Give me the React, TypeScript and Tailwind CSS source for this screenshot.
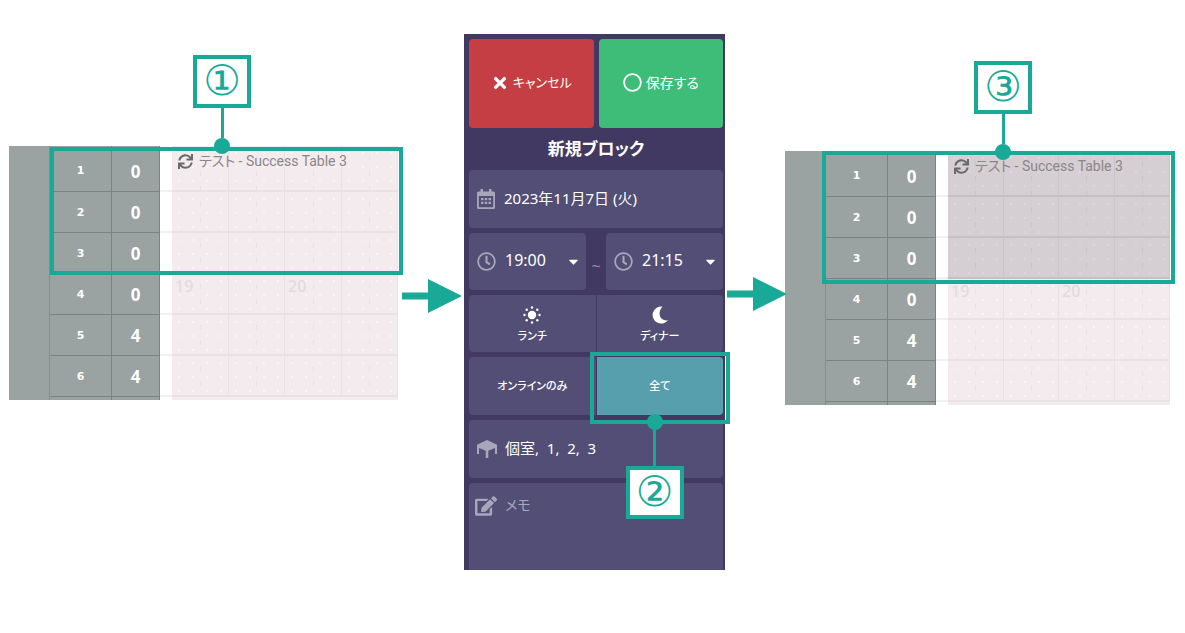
import { useState, type ReactNode } from 'react';
import { FaTimes, FaRegCircle, FaRegClock, FaCaretDown, FaEdit, FaSync } from 'react-icons/fa';

const ROWS = [
  { table: 1, seats: 0 },
  { table: 2, seats: 0 },
  { table: 3, seats: 0 },
  { table: 4, seats: 0 },
  { table: 5, seats: 4 },
  { table: 6, seats: 4 },
];

const TIMES = ['19:00', '20:00', '21:15', '22:00'];

function CalendarIcon() {
  return (
    <svg viewBox="0 0 18 20" className="h-5 w-[18px]" fill="currentColor">
      <path d="M3.500 0h2.500v2.500h6V0h2.500v2.500h2A1.500 1.500 0 0 1 18 4v14.500a1.500 1.500 0 0 1-1.500 1.500h-15A1.500 1.500 0 0 1 0 18.500V4a1.500 1.500 0 0 1 1.500-1.500h2zM1.800 7v10.600c0 .4.200.6.600.6h13.200c.4 0 .6-.2.600-.6V7z" />
      <path d="M4 9h2.500v2.300H4zm3.750 0h2.500v2.300h-2.500zm3.750 0H14v2.300h-2.500zM4 12.800h2.500v2.300H4zm3.750 0h2.500v2.300h-2.500zm3.750 0H14v2.300h-2.500z" />
    </svg>
  );
}

function TableIcon() {
  return (
    <svg viewBox="0 0 20 18" className="h-[18px] w-5" fill="currentColor">
      <path d="M10 0 20 4.800V14h-2V8L11.300 10.800V18H8.700V10.800L2 8V14H0V4.800z" />
    </svg>
  );
}

function SunIcon() {
  return (
    <svg viewBox="0 0 18 18" className="size-[18px]" fill="currentColor">
      <circle cx="9" cy="9" r="4.200" />
      <circle cx="9" cy="1.500" r="1.200" />
      <circle cx="9" cy="16.500" r="1.200" />
      <circle cx="1.500" cy="9" r="1.200" />
      <circle cx="16.500" cy="9" r="1.200" />
      <circle cx="3.700" cy="3.700" r="1.200" />
      <circle cx="14.300" cy="3.700" r="1.200" />
      <circle cx="3.700" cy="14.300" r="1.200" />
      <circle cx="14.300" cy="14.300" r="1.200" />
    </svg>
  );
}

function MoonIcon() {
  return (
    <svg viewBox="0 0 18 18" className="size-[18px]" fill="currentColor">
      <path d="M11.500.5A8.600 8.600 0 1 0 17 14.300C8.500 15.500 6 6.500 11.500.5z" />
    </svg>
  );
}

function Arrow() {
  return (
    <svg viewBox="0 0 60 34" className="relative z-10 h-[34px] w-[60px] shrink-0" fill="#18aa97">
      <path d="M0 13.500h26V0l34 17-34 17V20.500H0z" />
    </svg>
  );
}

function Callout({ label, className, below }: { label: string; className: string; below?: boolean }) {
  return (
    <div className={`absolute flex items-center ${below ? 'flex-col-reverse' : 'flex-col'} ${className}`}>
      <div className="flex h-[53px] w-[58px] items-center justify-center border-4 border-[#18aa97] bg-white pb-0.5 font-['DejaVu_Sans',sans-serif] text-[42px] leading-none text-[#18aa97]">
        {label}
      </div>
      <div className={`w-[3px] bg-[#18aa97] ${below ? 'h-9' : 'h-[30px]'}`} />
      <div className="size-4 rounded-full bg-[#18aa97]" />
    </div>
  );
}

function Slot({ hour, blocked }: { hour?: string; blocked: boolean }) {
  return (
    <td
      className={`relative border-r border-b-2 bg-[size:14px_14px] p-0 ${
        blocked
          ? 'border-r-[#cbc5c9] border-b-[#c6c0c4] bg-[#d5ced3] bg-[radial-gradient(circle,#dcd6da_1px,transparent_1px)]'
          : 'border-r-[#e9e2e5] border-b-[#e9e1e4] bg-[#f4ebee] bg-[radial-gradient(circle,#f9f4f6_1px,transparent_1px)]'
      }`}
    >
      <span
        className={`absolute inset-y-0 left-1/2 w-px ${
          blocked
            ? 'bg-[repeating-linear-gradient(transparent_0_10px,#cbc4c9_10px_15px)]'
            : 'bg-[repeating-linear-gradient(transparent_0_10px,#e9e1e5_10px_15px)]'
        }`}
      />
      {hour && <span className="absolute top-0.5 left-[3px] text-base leading-5 font-medium text-[#e3dbdf]">{hour}</span>}
    </td>
  );
}

function Timetable({ blocked, children }: { blocked: boolean; children: ReactNode }) {
  return (
    <section className="relative">
      <table className="w-full table-fixed border-separate border-spacing-0">
        <colgroup>
          <col className="w-[41px]" />
          <col className="w-[62px]" />
          <col className="w-12" />
          <col className="w-3" />
          <col />
          <col />
          <col />
          <col />
        </colgroup>
        <tbody>
          {ROWS.map((row, i) => (
            <tr key={row.table} className={i === 0 ? 'h-[46px]' : 'h-[41px]'}>
              {i === 0 && <td rowSpan={7} className="border-r border-[#858b8a] bg-[#9aa3a2] p-0" />}
              <th
                scope="row"
                className={`border-r border-b border-[#7d8281] bg-[#9aa3a2] p-0 font-['DejaVu_Sans',sans-serif] text-[11px] font-bold text-white ${i === 0 ? 'pt-1.5' : 'pt-0.5'}`}
              >
                {row.table}
              </th>
              <td
                className={`border-r border-b border-[#7d8281] bg-[#9aa3a2] p-0 text-center text-[17px] leading-5 font-bold text-white ${i === 0 ? 'pt-1.5' : 'pt-0.5'}`}
              >
                {row.seats}
              </td>
              <td className="border-b-2 border-[#eef2f2] p-0" />
              {[0, 1, 2, 3].map((slot) => (
                <Slot
                  key={slot}
                  blocked={blocked && i < 3}
                  hour={i === 3 && slot % 2 === 0 ? String(19 + slot / 2) : undefined}
                />
              ))}
            </tr>
          ))}
          <tr className="h-[3px]">
            <td className="border-r border-[#7d8281] bg-[#9aa3a2] p-0" />
            <td className="border-r border-[#7d8281] bg-[#9aa3a2] p-0" />
            <td className="p-0" />
            <td colSpan={4} className="bg-[#f4ebee] p-0" />
          </tr>
        </tbody>
      </table>
      <p className="absolute top-[3px] left-[169px] flex items-center gap-[6px] font-[Roboto,'Noto_Sans_CJK_JP',sans-serif] text-sm leading-6 whitespace-nowrap text-[#8b8688]">
        <FaSync className="size-[15px] text-[#6a6a6a]" />
        テスト - Success Table 3
      </p>
      {children}
    </section>
  );
}

function TimeSelect({ label, value, onChange }: { label: string; value: string; onChange: (v: string) => void }) {
  return (
    <label className="relative flex h-[57px] flex-1 items-center rounded bg-[#534e75] text-white">
      <FaRegClock className="absolute left-2 size-[19px] text-[#a9a6ba]" />
      <select
        aria-label={label}
        value={value}
        onChange={(e) => onChange(e.target.value)}
        className="h-full w-full appearance-none bg-transparent pb-1 pl-9 text-base outline-none"
      >
        {TIMES.map((t) => (
          <option key={t}>{t}</option>
        ))}
      </select>
      <FaCaretDown className="pointer-events-none absolute right-[5px] size-[15px]" />
    </label>
  );
}

export default function App() {
  const [date, setDate] = useState('2023年11月7日 (火)');
  const [start, setStart] = useState('19:00');
  const [end, setEnd] = useState('21:15');
  const [tables, setTables] = useState('個室,  1,  2,  3');

  return (
    <main className="grid min-h-screen grid-cols-[389fr_66px_261px_60px_385fr] items-start bg-white pt-[34px] pr-[15px] pl-[9px] font-['Noto_Sans','Noto_Sans_CJK_JP',sans-serif] [font-feature-settings:'palt']">
      {/* Before */}
      <div className="pt-28">
        <Timetable blocked={false}>
          <div className="absolute top-px -right-[5px] left-[41px] h-32 border-4 border-[#18aa97]">
            <Callout label="①" className="-top-24 left-[139px]" />
          </div>
        </Timetable>
      </div>

      <div className="flex justify-end pt-[245px] pr-0.5">
        <Arrow />
      </div>

      {/* New block form */}
      <form className="flex flex-col gap-[5px] bg-[#423962] pt-[5px] pr-0.5 pl-[5px] text-white" onSubmit={(e) => e.preventDefault()}>
        <div className="flex gap-[5px]">
          <button type="button" className="flex h-[89px] flex-1 items-center justify-center gap-1 rounded bg-[#c53e44] pb-0.5 text-[13px]">
            <FaTimes className="size-[18px]" />
            キャンセル
          </button>
          <button type="submit" className="flex h-[89px] flex-1 items-center justify-center gap-1 rounded bg-[#3ebd79] pb-0.5 text-sm">
            <FaRegCircle className="size-[19px]" />
            保存する
          </button>
        </div>
        <h1 className="text-center text-[17px] leading-8 font-bold">新規ブロック</h1>
        <label className="flex h-[58px] items-center gap-[9px] rounded bg-[#534e75] px-2">
          <span className="text-[#a9a6ba]">
            <CalendarIcon />
          </span>
          <input
            aria-label="日付"
            value={date}
            onChange={(e) => setDate(e.target.value)}
            className="min-w-0 flex-1 bg-transparent pb-0.5 text-[15px] outline-none"
          />
        </label>
        <div className="flex items-center">
          <TimeSelect label="開始" value={start} onChange={setStart} />
          <span className="w-5 pt-2 text-center text-base text-[#8f8ba6]">~</span>
          <TimeSelect label="終了" value={end} onChange={setEnd} />
        </div>
        <div className="flex h-[57px] gap-px text-[11px] font-medium">
          <button type="button" className="flex flex-1 flex-col items-center justify-center gap-1 rounded-l bg-[#534e75] pt-1">
            <SunIcon />
            ランチ
          </button>
          <button type="button" className="flex flex-1 flex-col items-center justify-center gap-1 rounded-r bg-[#534e75] pt-1">
            <MoonIcon />
            ディナー
          </button>
        </div>
        <div className="flex h-[58px] gap-px text-[11px] font-medium">
          <button type="button" className="flex-1 rounded-l bg-[#534e75]">
            オンラインのみ
          </button>
          <div className="relative flex flex-1">
            <button type="button" className="flex-1 rounded-r bg-[#589fae]">
              全て
            </button>
            <div className="pointer-events-none absolute -top-[5px] -right-[7px] -bottom-[9px] -left-[7px] z-10 border-4 border-[#18aa97]">
              <Callout label="②" className="top-[58px] left-8" below />
            </div>
          </div>
        </div>
        <label className="flex h-[58px] items-center gap-2 rounded bg-[#534e75] px-2">
          <span className="text-[#a9a6ba]">
            <TableIcon />
          </span>
          <input
            aria-label="テーブル"
            value={tables}
            onChange={(e) => setTables(e.target.value)}
            className="min-w-0 flex-1 bg-transparent pb-0.5 text-[15px] outline-none"
          />
        </label>
        <label className="flex h-[87px] gap-2 rounded-t bg-[#534e75] px-[6px] pt-3">
          <FaEdit className="size-[22px] shrink-0 text-[#a9a6ba]" />
          <textarea
            aria-label="メモ"
            placeholder="メモ"
            className="min-w-0 flex-1 resize-none bg-transparent text-sm leading-5 outline-none placeholder:text-[#a9a6ba]"
          />
        </label>
      </form>

      <div className="flex pt-[243px] pl-0.5">
        <Arrow />
      </div>

      {/* After */}
      <div className="pt-[117px]">
        <Timetable blocked>
          <div className="absolute top-0 -right-[5px] left-[37px] h-[133px] border-4 border-[#18aa97]">
            <Callout label="③" className="-top-[94px] left-[148px]" />
          </div>
        </Timetable>
      </div>
    </main>
  );
}
